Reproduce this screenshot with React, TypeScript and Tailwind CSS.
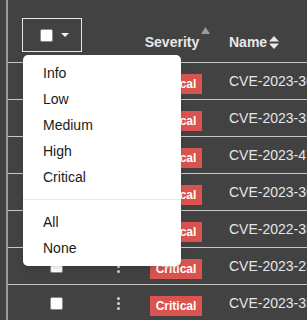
import React from 'react';

const rows = [
  'CVE-2023-36884',
  'CVE-2023-35078',
  'CVE-2023-4762',
  'CVE-2023-36761',
  'CVE-2022-35255',
  'CVE-2023-23397',
  'CVE-2023-35311',
];

const options = ['Info', 'Low', 'Medium', 'High', 'Critical'];

function Box() {
  return <span className="block w-[13px] h-[13px] rounded-[2px] bg-white border border-[#8a8a96]" />;
}

function Kebab() {
  return (
    <span className="flex flex-col gap-[2px] items-center">
      <span className="w-[3px] h-[3px] rounded-full bg-[#d0d0d0]" />
      <span className="w-[3px] h-[3px] rounded-full bg-[#d0d0d0]" />
      <span className="w-[3px] h-[3px] rounded-full bg-[#d0d0d0]" />
    </span>
  );
}

export default function App() {
  return (
    <div
      className="relative w-[307px] h-[320px] overflow-hidden bg-[#424242]"
      style={{ fontFamily: '"Liberation Sans", Arial, sans-serif' }}
    >
      <div className="ml-[6px] border-l-2 border-[#9a9a9a] h-full">
        {/* header */}
        <div className="flex h-[63px] border-b border-[#c8c8c8]">
          <div className="w-[92px] shrink-0 pt-[18px] pl-[14px]">
            <button className="flex items-center w-[60px] h-[34px] border border-[#e6e6e6] pl-[17px] gap-[8px]">
              <Box />
              <svg width="8" height="4" viewBox="0 0 8 4">
                <path d="M0 0h8L4 4z" fill="#f2f2f2" />
              </svg>
            </button>
          </div>
          <div className="w-[37px] shrink-0" />
          <div className="w-[78px] shrink-0 flex justify-center pt-[34px]">
            <span className="relative text-[14px] leading-[17px] font-bold text-[#e8e8e8] pr-[8px]">
              Severity
              <svg className="absolute right-[-3px] top-[-7px]" width="9" height="7" viewBox="0 0 9 7">
                <path d="M4.5 0L9 7H0z" fill="#9a9a9a" />
              </svg>
            </span>
          </div>
          <div className="pl-[14px] pt-[34px] flex items-start gap-[2px] shrink-0">
            <span className="text-[14px] leading-[17px] font-bold text-[#e8e8e8]">Name</span>
            <svg className="mt-[2px]" width="10" height="13" viewBox="0 0 10 13">
              <path d="M5 0L10 5.5H0z M5 13L0 7.5h10z" fill="#e8e8e8" />
            </svg>
          </div>
        </div>

        {/* rows */}
        {rows.map((id) => (
          <div key={id} className="flex items-center h-[37px] border-b border-[#c8c8c8]">
            <div className="w-[92px] shrink-0 pl-[42px]">
              <Box />
            </div>
            <div className="w-[37px] shrink-0 flex justify-center">
              <Kebab />
            </div>
            <div className="w-[78px] shrink-0 flex justify-center pt-[5px]">
              <span className="bg-[#d9534f] text-white text-[12px] font-bold leading-[20px] w-[52px] text-center">
                Critical
              </span>
            </div>
            <div className="pl-[14px] shrink-0 text-[14px] text-[#e6e6e6] whitespace-nowrap">{id}</div>
          </div>
        ))}
      </div>

      {/* dropdown */}
      <div className="absolute left-[23px] top-[55px] w-[158px] bg-white rounded-[5px] shadow-md py-[5px]">
        {options.map((o) => (
          <div key={o} className="h-[26px] flex items-center pl-[20px] text-[14px] text-[#1a1a1a]">
            {o}
          </div>
        ))}
        <div className="my-[9px] h-px bg-[#e8e8e8]" />
        <div className="h-[26px] flex items-center pl-[20px] text-[14px] text-[#1a1a1a]">All</div>
        <div className="h-[26px] flex items-center pl-[20px] text-[14px] text-[#1a1a1a]">None</div>
      </div>
    </div>
  );
}
